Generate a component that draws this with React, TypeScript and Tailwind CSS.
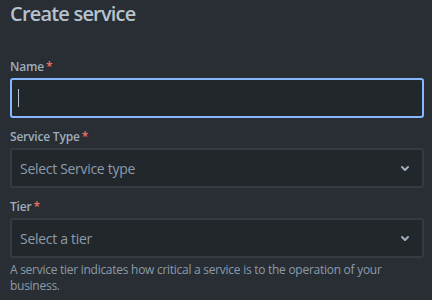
import React from "react";

function Chevron() {
  return (
    <svg width="24" height="24" viewBox="0 0 24 24" className="text-[#9fadbc]">
      <path
        d="M8.292 10.293a1.01 1.01 0 0 0 0 1.419l2.939 2.965c.218.215.5.322.779.322s.556-.107.769-.322l2.93-2.955a1.01 1.01 0 0 0 0-1.419.987.987 0 0 0-1.406 0l-2.298 2.317-2.307-2.327a.99.99 0 0 0-1.406 0"
        fill="currentColor"
      />
    </svg>
  );
}

function Label({ text }: { text: string }) {
  return (
    <div className="flex items-start h-[16px] text-[12px] leading-[16px] font-semibold tracking-[-0.2px] text-[#9fadbc]">
      <span>{text}</span>
      <span className="text-[#f87168] pl-[2px]">*</span>
    </div>
  );
}

function SelectBox({ placeholder }: { placeholder: string }) {
  return (
    <div className="mt-[3px] h-[40px] flex items-center justify-between rounded-[3px] border-2 border-[#343b42] bg-[#22272b] pl-[8px] pr-[5px]">
      <span className="text-[14px] tracking-[-0.3px] text-[#8c9bab]">{placeholder}</span>
      <Chevron />
    </div>
  );
}

export default function App() {
  return (
    <div
      className="w-[432px] h-[300px] bg-[#282e33] pl-[10px] pr-[8px] overflow-hidden"
      style={{ fontFamily: '"Open Sans", "Noto Sans", sans-serif' }}
    >
      <h1 className="pt-[2px] text-[20px] leading-[24px] font-semibold tracking-[-0.8px] text-[#b6c2cf]">
        Create service
      </h1>
      <div className="mt-[33px]">
        <Label text="Name" />
        <div className="mt-[3px] h-[40px] flex items-center rounded-[3px] border-2 border-[#85b8ff] bg-[#22272b] pl-[6px]">
          <span className="block w-[1px] h-[18px] bg-[#b6c2cf]" />
        </div>
      </div>
      <div className="mt-[11px]">
        <Label text="Service Type" />
        <SelectBox placeholder="Select Service type" />
      </div>
      <div className="mt-[11px]">
        <Label text="Tier" />
        <SelectBox placeholder="Select a tier" />
      </div>
      <p className="mt-[4px] text-[12px] leading-[16px] tracking-[-0.27px] text-[#8c9bab]">
        A service tier indicates how critical a service is to the operation of your business.
      </p>
    </div>
  );
}
